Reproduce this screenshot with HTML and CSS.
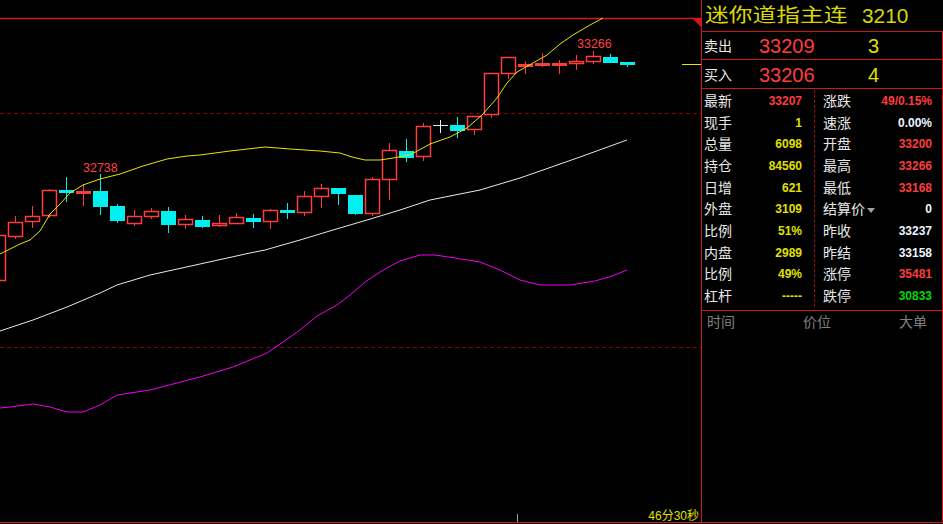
FILE: index.html
```html
<html>
<head>
	<title>迷你道指主连</title>
	<meta charset="UTF-8">
	<link rel="stylesheet" href="styles.css">
</head>
<body>

<div class="screen">

	<div class="chart">
		<svg width="701" height="522" viewBox="0 0 701 522">
			<line class="frame" x1="0" y1="18.5" x2="701" y2="18.5"/>
			<polygon class="corner" points="692,18 701,18 701,27"/>
			<line class="grid" x1="0" y1="113.5" x2="701" y2="113.5"/>
			<line class="grid" x1="0" y1="347.5" x2="701" y2="347.5"/>

			<!-- rising candles -->
			<g class="up">
				<line x1="15.5" y1="216" x2="15.5" y2="239"/><rect x="8.5" y="222.5" width="14" height="14"/>
				<rect x="-8.5" y="235.5" width="14" height="45"/>
				<line x1="32.5" y1="206" x2="32.5" y2="228"/><rect x="25.5" y="216.5" width="14" height="5"/>
				<line x1="49.5" y1="189" x2="49.5" y2="218"/><rect x="42.5" y="190.5" width="14" height="25"/>
				<line x1="134.5" y1="210" x2="134.5" y2="226"/><rect x="127.5" y="216.5" width="14" height="7"/>
				<line x1="151.5" y1="208" x2="151.5" y2="219"/><rect x="144.5" y="211.5" width="14" height="5"/>
				<line x1="185.5" y1="215" x2="185.5" y2="229"/><rect x="178.5" y="219.5" width="14" height="5"/>
				<line x1="219.5" y1="215" x2="219.5" y2="227"/><rect x="212.5" y="223.5" width="14" height="2"/>
				<line x1="236.5" y1="213" x2="236.5" y2="224"/><rect x="229.5" y="217.5" width="14" height="6"/>
				<line x1="270.5" y1="209" x2="270.5" y2="229"/><rect x="263.5" y="210.5" width="14" height="11"/>
				<line x1="304.5" y1="191" x2="304.5" y2="216"/><rect x="297.5" y="196.5" width="14" height="16"/>
				<line x1="321.5" y1="184" x2="321.5" y2="208"/><rect x="314.5" y="188.5" width="14" height="8"/>
				<line x1="372.5" y1="177" x2="372.5" y2="216"/><rect x="365.5" y="179.5" width="14" height="34"/>
				<line x1="389.5" y1="143" x2="389.5" y2="200"/><rect x="382.5" y="150.5" width="14" height="29"/>
				<line x1="423.5" y1="123" x2="423.5" y2="161"/><rect x="416.5" y="126.5" width="14" height="30"/>
				<line x1="474.5" y1="116" x2="474.5" y2="135"/><rect x="467.5" y="116.5" width="14" height="13"/>
				<line x1="491.5" y1="73" x2="491.5" y2="118"/><rect x="484.5" y="73.5" width="14" height="41"/>
				<line x1="508.5" y1="57" x2="508.5" y2="79"/><rect x="501.5" y="57.5" width="14" height="16"/>
				<line x1="576.5" y1="55" x2="576.5" y2="70"/><rect x="569.5" y="61.5" width="14" height="2"/>
				<line x1="593.5" y1="51" x2="593.5" y2="64"/><rect x="586.5" y="56.5" width="14" height="5"/>
			</g>

			<!-- flat candles -->
			<g class="flat">
				<line x1="83.5" y1="184" x2="83.5" y2="206"/><rect x="76" y="191" width="15" height="3"/>
				<line x1="525.5" y1="61" x2="525.5" y2="74"/><rect x="518" y="64" width="15" height="3"/>
				<line x1="542.5" y1="53" x2="542.5" y2="67"/><rect x="535" y="63" width="15" height="3"/>
				<line x1="559.5" y1="60" x2="559.5" y2="74"/><rect x="552" y="63" width="15" height="3"/>
			</g>

			<!-- falling candles -->
			<g class="down">
				<line x1="66.5" y1="177" x2="66.5" y2="202"/><rect x="59" y="190" width="15" height="3"/>
				<line x1="100.5" y1="174" x2="100.5" y2="215"/><rect x="93" y="191" width="15" height="16"/>
				<line x1="117.5" y1="204" x2="117.5" y2="223"/><rect x="110" y="206" width="15" height="15"/>
				<line x1="168.5" y1="207" x2="168.5" y2="233"/><rect x="161" y="211" width="15" height="14"/>
				<line x1="202.5" y1="216" x2="202.5" y2="228"/><rect x="195" y="220" width="15" height="7"/>
				<line x1="253.5" y1="214" x2="253.5" y2="228"/><rect x="246" y="218" width="15" height="4"/>
				<line x1="287.5" y1="203" x2="287.5" y2="219"/><rect x="280" y="210" width="15" height="3"/>
				<line x1="338.5" y1="188" x2="338.5" y2="205"/><rect x="331" y="188" width="15" height="6"/>
				<line x1="355.5" y1="195" x2="355.5" y2="215"/><rect x="348" y="195" width="15" height="19"/>
				<line x1="406.5" y1="139" x2="406.5" y2="162"/><rect x="399" y="151" width="15" height="7"/>
				<line x1="457.5" y1="117" x2="457.5" y2="138"/><rect x="450" y="125" width="15" height="6"/>
				<line x1="610.5" y1="54" x2="610.5" y2="63"/><rect x="603" y="57" width="15" height="6"/>
				<line x1="627.5" y1="62" x2="627.5" y2="67"/><rect x="620" y="62" width="15" height="3"/>
			</g>

			<g class="even">
				<line x1="433" y1="125.5" x2="448" y2="125.5"/>
				<line x1="440.5" y1="120" x2="440.5" y2="133"/>
			</g>

			<polyline class="ma-mid" points="0,331 33,320 67,307 100,293 117,285 150,275 200,264 250,253 265,250 300,240 333,230 367,220 400,210 430,200 480,190 520,178 543,170 580,157 627,140"/>
			<polyline class="ma-low" points="0,408 10,407 33,404 50,407 67,412 83,412 100,405 117,395 150,390 200,377 233,367 267,353 283,342 300,330 317,316 337,305 350,295 365,282 380,272 400,261 420,255 435,255 455,258 480,262 500,270 520,280 540,285 570,285 595,281 612,276 627,270"/>
			<polyline class="ma-top" points="0,254 10,249 20,244 30,240 40,231 50,214 60,204 70,193 83,185 100,179 120,174 143,166 167,159 187,156 200,155 230,151 265,147 290,149 320,151 340,153 352,157 365,160 380,160 393,158 410,155 430,144 450,137 467,128 482,115 497,98 507,83 517,72 533,63 547,55 560,44 573,35 590,25 603,18"/>

			<line class="last" x1="682" y1="64.5" x2="701" y2="64.5"/>

			<text class="mark" x="83" y="172">32738</text>
			<text class="mark" x="577" y="48">33266</text>
			<text class="clock" x="699" y="520">46分30秒</text>
			<line class="tick" x1="517.5" y1="514" x2="517.5" y2="522"/>
		</svg>
	</div>

	<div class="quote">
		<div class="quote-title">
			<span class="name">迷你道指主连</span><span class="code">3210</span>
		</div>

		<div class="panel">
			<div class="book-row first">
				<span class="lbl">卖出</span><span class="price">33209</span><span class="vol">3</span>
			</div>
			<div class="book-row">
				<span class="lbl">买入</span><span class="price">33206</span><span class="vol">4</span>
			</div>

			<div class="stats">
				<div class="stats-col left">
					<div class="stat"><span class="k">最新</span><span class="v red">33207</span></div>
					<div class="stat"><span class="k">现手</span><span class="v yel">1</span></div>
					<div class="stat"><span class="k">总量</span><span class="v yel">6098</span></div>
					<div class="stat"><span class="k">持仓</span><span class="v yel">84560</span></div>
					<div class="stat"><span class="k">日增</span><span class="v yel">621</span></div>
					<div class="stat"><span class="k">外盘</span><span class="v yel">3109</span></div>
					<div class="stat"><span class="k">比例</span><span class="v yel">51%</span></div>
					<div class="stat"><span class="k">内盘</span><span class="v yel">2989</span></div>
					<div class="stat"><span class="k">比例</span><span class="v yel">49%</span></div>
					<div class="stat"><span class="k">杠杆</span><span class="v yel">-----</span></div>
				</div>
				<div class="stats-col right">
					<div class="stat"><span class="k">涨跌</span><span class="v red">49/0.15%</span></div>
					<div class="stat"><span class="k">速涨</span><span class="v wht">0.00%</span></div>
					<div class="stat"><span class="k">开盘</span><span class="v red">33200</span></div>
					<div class="stat"><span class="k">最高</span><span class="v red">33266</span></div>
					<div class="stat"><span class="k">最低</span><span class="v red">33168</span></div>
					<div class="stat"><span class="k">结算价<i class="drop"></i></span><span class="v wht">0</span></div>
					<div class="stat"><span class="k">昨收</span><span class="v wht">33237</span></div>
					<div class="stat"><span class="k">昨结</span><span class="v wht">33158</span></div>
					<div class="stat"><span class="k">涨停</span><span class="v red">35481</span></div>
					<div class="stat"><span class="k">跌停</span><span class="v grn">30833</span></div>
				</div>
			</div>

			<div class="ticks-head">
				<span>时间</span><span>价位</span><span>大单</span>
			</div>
		</div>
	</div>

</div>

</body>
</html>
```

FILE: styles.css
```css
* {
	margin: 0;
	padding: 0;
	box-sizing: border-box;
}

body {
	background: #000;
	font-family: "Liberation Sans", "Noto Sans CJK SC", sans-serif;
	overflow: hidden;
}

.screen {
	display: flex;
	width: 943px;
	height: 523px;
	border-bottom: 1px solid #cc1a1a;
}

/* chart */

.chart {
	width: 702px;
	border-right: 1px solid #cc1a1a;
}

.chart svg {
	display: block;
}

.frame {
	stroke: #d01818;
	stroke-width: 1.5;
}

.corner {
	fill: #d01818;
}

.grid {
	stroke: #8a0000;
	stroke-dasharray: 4 3;
}

.up line, .flat line {
	stroke: #ff3c3c;
}

.up rect {
	fill: #000;
	stroke: #ff3c3c;
	stroke-width: 1.5;
}

.flat rect {
	fill: #ff3c3c;
}

.down line {
	stroke: #00f0f0;
}

.down rect {
	fill: #00f0f0;
}

.even line {
	stroke: #f0f0f0;
}

.ma-top, .ma-mid, .ma-low {
	fill: none;
	stroke-width: 1;
}

.ma-top {
	stroke: #e6e600;
}

.ma-mid {
	stroke: #e8e8e8;
}

.ma-low {
	stroke: #f000f0;
}

.last {
	stroke: #e6e600;
}

.mark {
	fill: #ff4040;
	font-size: 12.5px;
}

.clock {
	fill: #e0e000;
	font-size: 12px;
	text-anchor: end;
}

.tick {
	stroke: #a0a0a0;
}

/* quote panel */

.quote {
	flex: 1;
	display: flex;
	flex-direction: column;
}

.quote-title {
	height: 32px;
	display: flex;
	align-items: center;
	padding-left: 3px;
	border-bottom: 1px solid #cc1a1a;
	color: #d8d800;
	line-height: 1;
}

.quote-title .name {
	display: inline-block;
	font-size: 19px;
	transform: scaleX(1.25);
	transform-origin: left center;
}

.quote-title .code {
	font-size: 20px;
	margin-left: 43px;
	transform: scaleX(1.04);
	transform-origin: left center;
}

.panel {
	flex: 1;
	display: flex;
	flex-direction: column;
	border-right: 1px solid #cc1a1a;
}

.book-row {
	height: 29px;
	display: flex;
	align-items: center;
	padding: 1px 0 0 2px;
	border-bottom: 1px solid #cc1a1a;
	line-height: 1;
}

.book-row.first {
	height: 28px;
}

.book-row .lbl {
	width: 55px;
	font-size: 14px;
	color: #e8e8e8;
}

.book-row .price {
	width: 109px;
	font-size: 20px;
	color: #ff3c3c;
}

.book-row .vol {
	font-size: 20px;
	color: #e0e000;
}

.stats {
	height: 222px;
	display: flex;
	padding: 1px 0 3px 0;
	border-bottom: 1px solid #cc1a1a;
}

.stats-col {
	display: flex;
	flex-direction: column;
}

.stats-col.left {
	width: 113px;
	padding: 0 12px 0 2px;
	border-right: 1px dashed #a01010;
}

.stats-col.right {
	flex: 1;
	padding: 0 10px 0 8px;
}

.stat {
	height: 21.7px;
	display: flex;
	justify-content: space-between;
	align-items: center;
	line-height: 1;
}

.stat .k {
	font-size: 14px;
	color: #e8e8e8;
}

.stat .v {
	font-size: 12px;
	font-weight: bold;
}

.drop {
	display: inline-block;
	margin-left: 2px;
	vertical-align: middle;
	border-left: 4px solid transparent;
	border-right: 4px solid transparent;
	border-top: 5px solid #a0a0a0;
}

.red { color: #ff3c3c; }
.yel { color: #e0e000; }
.wht { color: #eef4ff; }
.grn { color: #00d800; }

.ticks-head {
	height: 22px;
	display: flex;
	justify-content: space-between;
	align-items: center;
	padding: 0 15px 0 5px;
	font-size: 14px;
	color: #808080;
	line-height: 1;
}
```
